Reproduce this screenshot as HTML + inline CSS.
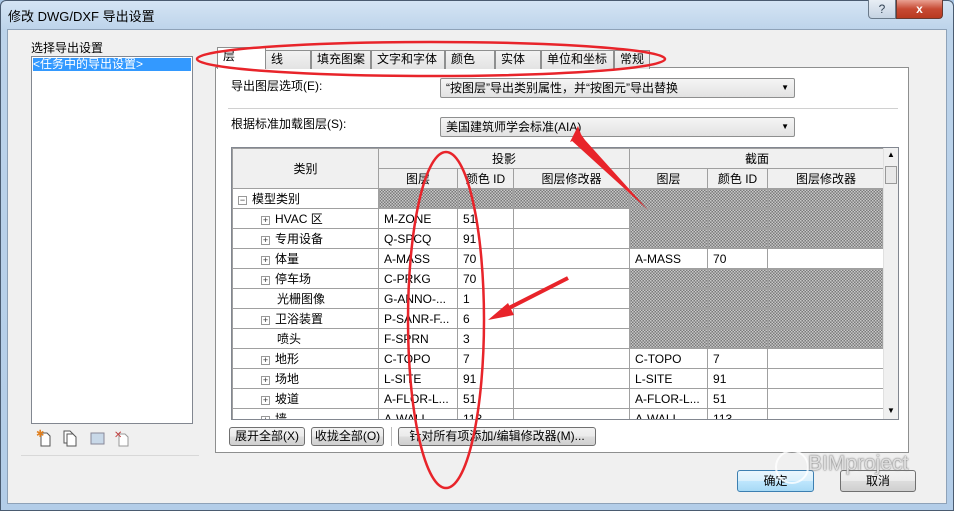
<!DOCTYPE html>
<html><head><meta charset="utf-8"><style>
*{margin:0;padding:0;box-sizing:border-box}
body{width:954px;height:511px;overflow:hidden;position:relative;font-family:"Liberation Sans","Noto Sans CJK SC",sans-serif;font-size:12px;color:#000;background:#a9c6e4}
.a{position:absolute}
.tb{left:0;top:0;width:954px;height:511px;background:linear-gradient(180deg,#d4e4f4 0,#bcd3ea 30px,#b3cde8 100%);border:1px solid #4a5b70;border-radius:6px 6px 0 0}
.client{left:7px;top:29px;width:940px;height:475px;background:#f0f0f0;border:1px solid #8ea2b8}
.btn{position:absolute;border:1px solid #707070;border-radius:3px;background:linear-gradient(#f2f2f2,#ebebeb 50%,#dddddd 51%,#cfcfcf);text-align:center;font-size:12px;line-height:17px}
.tab{position:absolute;top:50px;height:19px;border:1px solid #8e8f8f;border-bottom:none;background:linear-gradient(#f2f2f2,#e3e3e3);font-size:12px;padding-left:5px;line-height:17px}
.dd{position:absolute;left:440px;width:355px;height:20px;border:1px solid #8e8f8f;border-radius:2px;background:linear-gradient(#f5f5f5,#e2e2e2);padding-left:5px;line-height:18px}
.dd:after{content:"▼";position:absolute;right:5px;top:0;font-size:8px}
table{border-collapse:collapse;table-layout:fixed}
td{border:1px solid #a0a0a0;height:20px;padding:0 0 0 5px;white-space:nowrap;overflow:hidden;font-size:12px}
th{background:#f0f0f0;border:1px solid #a0a0a0;font-weight:normal;font-size:12px;height:20px}
.h{background-color:#a0a0a0;background-image:repeating-conic-gradient(#7a7a7a 0 25%,#c8c8c8 0 50%);background-size:3px 3px}
.c{padding-left:28px}
.pl{display:inline-block;width:9px;height:9px;border:1px solid #999;font-size:9px;line-height:7px;text-align:center;margin-right:5px;color:#333;background:#fff}
</style></head><body>
<div class="a tb"></div>
<div class="a" style="left:8px;top:6px;font-size:13px">修改 DWG/DXF 导出设置</div>
<div class="a" style="left:868px;top:0;width:28px;height:19px;border:1px solid #6a7a8a;border-top:none;border-radius:0 0 0 4px;background:linear-gradient(#e8eef5,#c5d3e2);text-align:center;font-size:12px;line-height:18px;color:#345">?</div>
<div class="a" style="left:896px;top:0;width:47px;height:19px;border:1px solid #6a3a30;border-top:none;border-radius:0 0 4px 0;background:linear-gradient(#e9a192,#c74a33 50%,#b83a20);text-align:center;color:#fff;font-weight:bold;line-height:18px">x</div>
<div class="a client"></div>
<div class="a" style="left:31px;top:39px">选择导出设置</div>
<div class="a" style="left:31px;top:56px;width:162px;height:368px;background:#fff;border:1px solid #828790"></div>
<div class="a" style="left:33px;top:58px;width:158px;height:13px;background:#3399ff;color:#fff;line-height:13px">&lt;任务中的导出设置&gt;</div>
<div class="a" style="left:21px;top:455px;width:178px;height:1px;background:#d8d8d8"></div>
<svg class="a" style="left:36px;top:428px" width="100" height="20">
<g fill="#fff" stroke="#555"><path d="M5 5h6l3 3v10h-9z"/><path d="M28 3h6l3 3v9h-9z"/><path d="M31 6h6l3 3v9h-9z"/><path d="M83 6h6l3 3v9h-9z" stroke="#999"/></g>
<text x="0" y="9" fill="#e08020" font-size="10">✱</text>
<rect x="55" y="5" width="13" height="11" fill="#c8d8e8" stroke="#889"/>
<text x="78" y="10" fill="#c04040" font-size="10">✕</text></svg>
<div class="a" style="left:215px;top:67px;width:694px;height:386px;background:#fff;border:1px solid #8e8f8f"></div>
<div class="tab" style="left:265px;width:46px">线</div>
<div class="tab" style="left:311px;width:60px">填充图案</div>
<div class="tab" style="left:371px;width:74px">文字和字体</div>
<div class="tab" style="left:445px;width:50px">颜色</div>
<div class="tab" style="left:495px;width:46px">实体</div>
<div class="tab" style="left:541px;width:73px">单位和坐标</div>
<div class="tab" style="left:614px;width:36px">常规</div>
<div class="tab" style="left:217px;top:47px;width:49px;height:22px;background:#fff">层</div>
<div class="a" style="left:231px;top:77px">导出图层选项(E):</div>
<div class="dd" style="top:78px">“按图层”导出类别属性，并“按图元”导出替换</div>
<div class="a" style="left:228px;top:108px;width:670px;height:1px;background:#d0d0d0"></div>
<div class="a" style="left:231px;top:115px">根据标准加载图层(S):</div>
<div class="dd" style="top:117px">美国建筑师学会标准(AIA)</div>
<div class="a" style="left:231px;top:147px;width:668px;height:273px;border:1px solid #828790;overflow:hidden;background:#fff">
<table style="width:652px">
<colgroup><col style="width:146px"><col style="width:79px"><col style="width:56px"><col style="width:116px"><col style="width:78px"><col style="width:60px"><col style="width:117px"></colgroup>
<tr><th rowspan="2">类别</th><th colspan="3">投影</th><th colspan="3">截面</th></tr>
<tr><th>图层</th><th>颜色 ID</th><th>图层修改器</th><th>图层</th><th>颜色 ID</th><th>图层修改器</th></tr>
<tr><td><span class="pl">−</span>模型类别</td><td class="h"></td><td class="h"></td><td class="h"></td><td class="h"></td><td class="h"></td><td class="h"></td></tr>
<tr><td class="c"><span class="pl">+</span>HVAC 区</td><td>M-ZONE</td><td>51</td><td></td><td class="h"></td><td class="h"></td><td class="h"></td></tr>
<tr><td class="c"><span class="pl">+</span>专用设备</td><td>Q-SPCQ</td><td>91</td><td></td><td class="h"></td><td class="h"></td><td class="h"></td></tr>
<tr><td class="c"><span class="pl">+</span>体量</td><td>A-MASS</td><td>70</td><td></td><td>A-MASS</td><td>70</td><td></td></tr>
<tr><td class="c"><span class="pl">+</span>停车场</td><td>C-PRKG</td><td>70</td><td></td><td class="h"></td><td class="h"></td><td class="h"></td></tr>
<tr><td class="c" style="padding-left:44px">光栅图像</td><td>G-ANNO-...</td><td>1</td><td></td><td class="h"></td><td class="h"></td><td class="h"></td></tr>
<tr><td class="c"><span class="pl">+</span>卫浴装置</td><td>P-SANR-F...</td><td>6</td><td></td><td class="h"></td><td class="h"></td><td class="h"></td></tr>
<tr><td class="c" style="padding-left:44px">喷头</td><td>F-SPRN</td><td>3</td><td></td><td class="h"></td><td class="h"></td><td class="h"></td></tr>
<tr><td class="c"><span class="pl">+</span>地形</td><td>C-TOPO</td><td>7</td><td></td><td>C-TOPO</td><td>7</td><td></td></tr>
<tr><td class="c"><span class="pl">+</span>场地</td><td>L-SITE</td><td>91</td><td></td><td>L-SITE</td><td>91</td><td></td></tr>
<tr><td class="c"><span class="pl">+</span>坡道</td><td>A-FLOR-L...</td><td>51</td><td></td><td>A-FLOR-L...</td><td>51</td><td></td></tr>
<tr><td class="c"><span class="pl">+</span>墙</td><td>A-WALL</td><td>113</td><td></td><td>A-WALL</td><td>113</td><td></td></tr>
</table>
<div class="a" style="left:651px;top:0;width:16px;height:271px;background:#f0f0f0;border-left:1px solid #e0e0e0"></div>
<div class="a" style="left:653px;top:18px;width:12px;height:18px;border:1px solid #999;background:#e8e8e8"></div>
<div class="a" style="left:655px;top:2px;font-size:8px">▲</div>
<div class="a" style="left:655px;top:258px;font-size:8px">▼</div>
</div>
<div class="btn" style="left:229px;top:427px;width:76px;height:19px">展开全部(X)</div>
<div class="btn" style="left:311px;top:427px;width:73px;height:19px">收拢全部(O)</div>
<div class="a" style="left:391px;top:427px;width:1px;height:19px;background:#bbb"></div>
<div class="btn" style="left:398px;top:427px;width:198px;height:19px">针对所有项添加/编辑修改器(M)...</div>
<div class="btn" style="left:737px;top:470px;width:77px;height:22px;line-height:20px;border-color:#3c7fb1;background:linear-gradient(#eaf6fd,#d9f0fc 50%,#bee6fd 51%,#a7d9f5)">确定</div>
<div class="btn" style="left:840px;top:470px;width:76px;height:22px;line-height:20px">取消</div>
<div class="a" style="left:775px;top:450px;width:34px;height:34px;border-radius:50%;border:2px solid rgba(255,255,255,.8)"></div>
<div class="a" style="left:808px;top:452px;font-size:21px;color:rgba(235,235,235,.9);text-shadow:0 0 1px #666,0 0 2px #888">BIMproject</div>
<svg class="a" style="left:0;top:0" width="954" height="511">
<ellipse cx="431" cy="59" rx="234" ry="17" fill="none" stroke="#e8242a" stroke-width="2.5"/>
<ellipse cx="446" cy="320" rx="38" ry="168" fill="none" stroke="#e8242a" stroke-width="2.5"/>
<path d="M648 210 L585 140 L580 133 L571 140 Z" fill="#e8242a"/>
<path d="M578 126 l-8 16 l12 -5z" fill="#e8242a"/>
<path d="M568 278 L505 310" stroke="#e8242a" stroke-width="4"/>
<path d="M488 320 l20 -17 l6 12z" fill="#e8242a"/>
</svg>
</body></html>
